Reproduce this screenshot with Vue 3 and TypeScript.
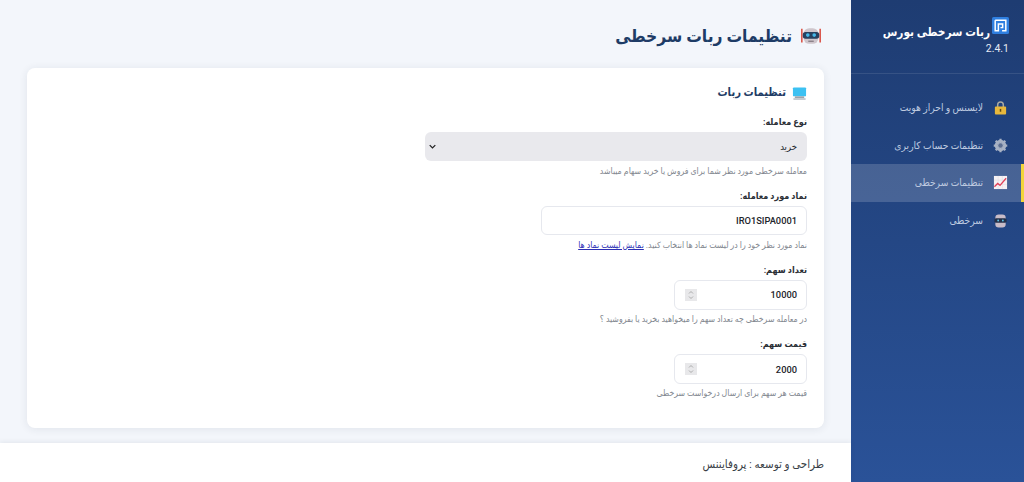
<script setup lang="ts">
import { ref } from 'vue'

interface NavItem { label: string; icon: string; active?: boolean }
const nav: NavItem[] = [
  { label: 'لایسنس و احراز هویت', icon: 'lock' },
  { label: 'تنظیمات حساب کاربری', icon: 'gear' },
  { label: 'تنظیمات سرخطی', icon: 'chart', active: true },
  { label: 'سرخطی', icon: 'robot' },
]
const symbol = ref('IRO1SIPA0001')
const qty = ref(10000)
const price = ref(2000)
</script>

<template>
  <div class="app" dir="rtl">
    <aside class="sidebar">
      <div class="brand">
        <div class="brand-title">
          <svg class="logo" viewBox="0 0 16 16">
            <rect width="16" height="16" rx="1.500" fill="#2f7fe0" />
            <path d="M3 3h10v10h-3.500M3 3v10h3V6.500h4v3.500H8" fill="none" stroke="#fff" stroke-width="1.400" />
          </svg>
          <span>ربات سرخطی بورس</span>
        </div>
        <div class="version">2.4.1</div>
      </div>
      <nav class="nav">
        <a v-for="item in nav" :key="item.label" class="nav-item" :class="{ active: item.active }">
          <svg v-if="item.icon === 'lock'" class="nav-icon" viewBox="0 0 16 16">
            <path d="M5 8V5a3 3 0 0 1 6 0v3" fill="none" stroke="#a9a9a0" stroke-width="1.600" />
            <rect x="2" y="7" width="12" height="8.500" rx="1" fill="#e8b83c" />
            <rect x="7.200" y="9.500" width="1.600" height="3" fill="#5c4a1a" />
          </svg>
          <svg v-else-if="item.icon === 'gear'" class="nav-icon" viewBox="0 0 16 16">
            <circle cx="8" cy="8" r="4.600" fill="none" stroke="#a8b2c4" stroke-width="3" />
            <path d="M8 .8v14.400M.8 8h14.400M2.900 2.900l10.200 10.200M13.100 2.900 2.900 13.100" stroke="#a8b2c4" stroke-width="2.400" />
            <circle cx="8" cy="8" r="2.400" fill="#5d6f92" />
          </svg>
          <svg v-else-if="item.icon === 'chart'" class="nav-icon" viewBox="0 0 16 16">
            <rect x="1" y="1" width="14" height="14" fill="#f6f2f4" />
            <path d="M1 5.500h14M1 10h14M5.500 1v14M10 1v14" stroke="#e2dbe2" stroke-width=".6" />
            <path d="M1.500 12.500 5 9l2.500 2 6.500-7.500" fill="none" stroke="#e0405a" stroke-width="1.400" />
          </svg>
          <svg v-else class="nav-icon" viewBox="0 0 16 16">
            <rect x="2.500" y="1.500" width="11" height="14" rx="3.500" fill="#c9bcc8" />
            <rect x="1.500" y="5.500" width="13" height="5" rx="1.800" fill="#243049" />
            <circle cx="5.500" cy="8" r="1" fill="#5fc4e8" />
            <circle cx="10.500" cy="8" r="1" fill="#5fc4e8" />
          </svg>
          <span>{{ item.label }}</span>
        </a>
      </nav>
    </aside>

    <div class="main">
      <header class="page-head">
        <h1>
          <svg class="head-icon" viewBox="0 0 24 24">
            <path d="M2 4v15M22 4v15" stroke="#d9483b" stroke-width="1.600" />
            <rect x="4" y="3.500" width="16" height="17" rx="6" fill="#cfc6cc" />
            <rect x="3" y="7.500" width="18" height="7.500" rx="3" fill="#27415f" />
            <circle cx="8.500" cy="11" r="2" fill="#46b8e8" />
            <circle cx="15.500" cy="11" r="2" fill="#46b8e8" />
            <rect x="9" y="17" width="6" height="1.500" fill="#8a8088" />
          </svg>
          <span>تنظیمات ربات سرخطی</span>
        </h1>
      </header>

      <section class="card">
        <h2>
          <svg class="card-icon" viewBox="0 0 16 16">
            <rect x="1" y="1.500" width="14" height="9.500" rx="1" fill="#3cc1f2" />
            <rect x="3" y="11" width="10" height="2" fill="#9aa4ad" />
            <rect x="1.500" y="13" width="13" height="1.800" fill="#bcc4cb" />
          </svg>
          <span>تنظیمات ربات</span>
        </h2>

        <div class="field">
          <label>نوع معامله:</label>
          <div class="select">
            <span>خرید</span>
            <svg class="chev" viewBox="0 0 10 6"><path d="M1 1l4 4 4-4" fill="none" stroke="#222" stroke-width="1.800" /></svg>
          </div>
          <small>معامله سرخطی مورد نظر شما برای فروش یا خرید سهام میباشد</small>
        </div>

        <div class="field">
          <label>نماد مورد معامله:</label>
          <input class="input symbol" v-model="symbol" dir="rtl" />
          <small>نماد مورد نظر خود را در لیست نماد ها انتخاب کنید. <a class="link">نمایش لیست نماد ها</a></small>
        </div>

        <div class="field">
          <label>تعداد سهم:</label>
          <div class="input number">
            <span>{{ qty }}</span>
            <i class="spin"><svg viewBox="0 0 12 12"><path d="M4 4.500 6 2.500l2 2M4 7.500l2 2 2-2" fill="none" stroke="#9a9a9a" stroke-width=".8" /></svg></i>
          </div>
          <small>در معامله سرخطی چه تعداد سهم را میخواهید بخرید یا بفروشید ؟</small>
        </div>

        <div class="field last">
          <label>قیمت سهم:</label>
          <div class="input number">
            <span>{{ price }}</span>
            <i class="spin"><svg viewBox="0 0 12 12"><path d="M4 4.500 6 2.500l2 2M4 7.500l2 2 2-2" fill="none" stroke="#9a9a9a" stroke-width=".8" /></svg></i>
          </div>
          <small>قیمت هر سهم برای ارسال درخواست سرخطی</small>
        </div>
      </section>

      <footer class="footer">طراحی و توسعه : پروفایننس</footer>
    </div>
  </div>
</template>

<style>
html, body { margin: 0; padding: 0; }
</style>

<style scoped>
.app {
  display: flex;
  width: 1024px;
  height: 482px;
  overflow: hidden;
  font-family: Roboto, "DejaVu Sans", sans-serif;
  font-stretch: condensed;
  background: #f3f6fb;
}
.sidebar {
  width: 173px;
  flex: none;
  background: linear-gradient(180deg, #1e3c72 0%, #2a5298 100%);
  color: #fff;
}
.brand {
  height: 74px;
  box-sizing: border-box;
  padding: 17px 15px 0 0;
  border-bottom: 1px solid rgba(255, 255, 255, 0.1);
}
.brand-title {
  display: flex;
  align-items: flex-start;
  gap: 2px;
  font-size: 11.800px;
  line-height: 18px;
  font-weight: 600;
}
.brand-title span { margin-top: 6px; }
.logo { width: 17px; height: 17px; flex: none; }
.version {
  font-size: 10.500px;
  line-height: 12px;
  margin-top: 2px;
  color: #e6ebf5;
  font-stretch: normal;
}
.nav { padding-top: 15px; }
.nav-item {
  display: flex;
  align-items: center;
  gap: 10px;
  height: 37.500px;
  box-sizing: border-box;
  padding-right: 13px;
  font-size: 10.200px;
  color: #bfcbe0;
  border-right: 3px solid transparent;
}
.nav-item.active {
  background: rgba(255, 255, 255, 0.17);
  border-right-color: #f2d43b;
}
.nav-icon { width: 15px; height: 15px; flex: none; }
.main {
  flex: 1;
  display: flex;
  flex-direction: column;
  min-width: 0;
}
.page-head {
  height: 68px;
  padding-right: 29px;
  box-sizing: border-box;
}
h1 {
  margin: 0;
  padding-top: 24px;
  display: flex;
  align-items: center;
  gap: 8px;
  font-size: 17.300px;
  line-height: 24px;
  font-weight: 600;
  color: #1e3c66;
}
.head-icon { width: 22px; height: 22px; flex: none; }
.card {
  margin: 0 27px;
  height: 360px;
  box-sizing: border-box;
  background: #fff;
  border-radius: 8px;
  box-shadow: 0 1px 8px rgba(30, 40, 70, 0.09);
  padding: 16px 17px 0;
}
h2 {
  margin: 0 0 13.500px;
  display: flex;
  align-items: center;
  gap: 6px;
  font-size: 11.200px;
  line-height: 18px;
  font-weight: 600;
  color: #1e3c66;
}
.card-icon { width: 15px; height: 15px; flex: none; }
.field {
  display: flex;
  flex-direction: column;
  align-items: flex-start;
  margin-bottom: 13.300px;
}
.field.last { margin-bottom: 0; }
label {
  font-size: 9px;
  line-height: 13px;
  font-weight: 600;
  color: #2b2f36;
  margin-bottom: 3px;
}
small {
  font-size: 8.700px;
  line-height: 12px;
  margin-top: 3.500px;
  color: #82878f;
}
.select {
  width: 382px;
  height: 29.500px;
  box-sizing: border-box;
  background: #e9e9ed;
  border-radius: 6px;
  display: flex;
  align-items: center;
  justify-content: space-between;
  padding: 0 10px 0 4px;
  font-size: 9.500px;
  color: #22252b;
}
.chev { width: 7px; height: 5px; }
.input {
  box-sizing: border-box;
  height: 29.500px;
  background: #fff;
  border: 1px solid #e6e8ee;
  border-radius: 6px;
  font-family: inherit;
  font-size: 9.300px;
  font-weight: 500;
  font-stretch: normal;
  color: #22252b;
  outline: none;
}
.symbol { width: 266px; padding: 0 9px; }
.number {
  width: 133px;
  display: flex;
  align-items: center;
  justify-content: space-between;
  padding: 0 9px 0 10px;
}
.spin {
  width: 12px;
  height: 12px;
  background: #e8e8ea;
  display: block;
}
.spin svg { display: block; width: 12px; height: 12px; }
.link { color: #2c2fb5; text-decoration: underline; }
.footer {
  margin-top: 15px;
  flex: 1;
  background: #fff;
  box-shadow: 0 -1px 5px rgba(30, 40, 70, 0.08);
  padding: 10px 27px 0;
  font-size: 11.500px;
  line-height: 22px;
  color: #3a3f47;
}
</style>
